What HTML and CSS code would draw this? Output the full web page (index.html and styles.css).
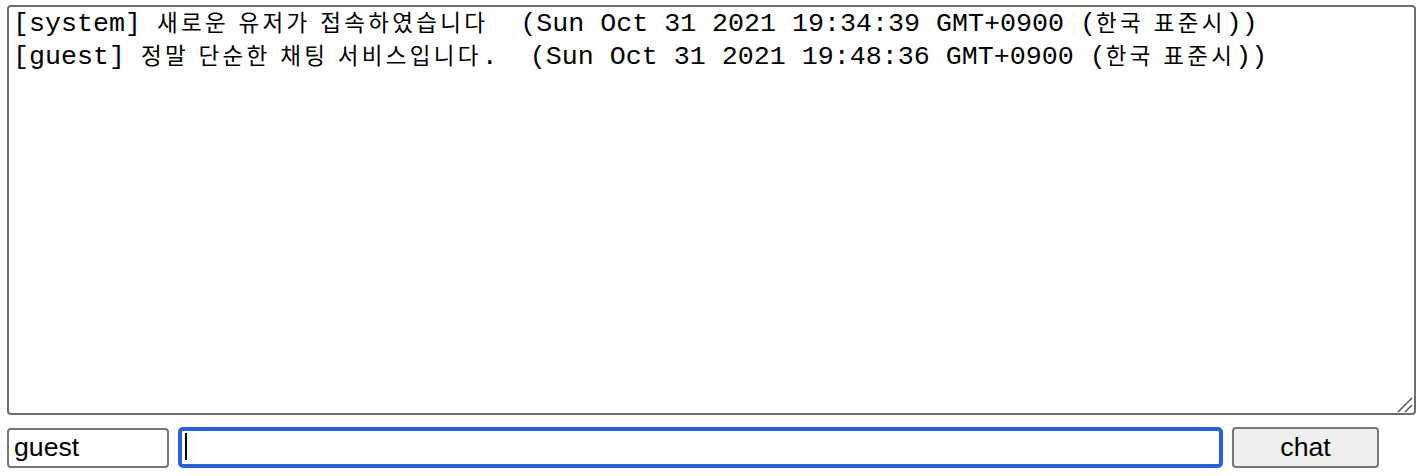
FILE: index.html
```html
<!DOCTYPE html>
<html lang="ko">
<head>
<meta charset="utf-8">
<title>chat</title>
<link rel="stylesheet" href="styles.css">
</head>
<body>
<main class="chat">
  <div class="log" role="log">
    <div class="line">[system] <span class="ko">새로운 유저가 접속하였습니다</span>  (Sun Oct 31 2021 19:34:39 GMT+0900 (<span class="ko">한국 표준시</span>))</div>
    <div class="line">[guest] <span class="ko">정말 단순한 채팅 서비스입니다</span>.  (Sun Oct 31 2021 19:48:36 GMT+0900 (<span class="ko">한국 표준시</span>))</div>
    <svg class="grip" width="20" height="20" viewBox="0 0 20 20" aria-hidden="true">
      <line x1="4" y1="19" x2="18" y2="5" stroke="#555" stroke-width="1.4"/>
      <line x1="11" y1="19" x2="18" y2="12" stroke="#555" stroke-width="1.4"/>
    </svg>
  </div>
  <form class="bar">
    <input class="name" type="text" value="guest">
    <span class="msg-wrap"><input class="msg" type="text" value=""></span>
    <button class="send" type="button">chat</button>
  </form>
</main>
</body>
</html>
```

FILE: styles.css
```css
html, body {
  margin: 0;
  padding: 0;
  background: #ffffff;
}

.chat {
  display: flex;
  flex-direction: column;
  padding: 5px 0 0 7px;
  gap: 12px;
}

.log {
  position: relative;
  box-sizing: border-box;
  width: 1409px;
  height: 410px;
  border: 2px solid #6e6e6e;
  border-radius: 4px;
  padding: 1px 4px 0;
  font-family: "Liberation Mono", "Noto Sans CJK KR", monospace;
  font-size: 26.67px;
  line-height: 33px;
  color: #000;
}

.line {
  height: 33px;
  white-space: pre;
}

.ko {
  font-family: "Noto Sans CJK KR", sans-serif;
  font-size: 22.5px;
  letter-spacing: 3.3px;
  line-height: 1;
}

.grip {
  position: absolute;
  right: 0;
  bottom: 0;
}

.bar {
  display: flex;
  align-items: center;
  margin: 0;
}

.name {
  box-sizing: border-box;
  width: 162px;
  height: 40px;
  border: 2px solid #767676;
  border-radius: 4px;
  padding: 0 5px;
  font-family: "Liberation Sans", Arial, sans-serif;
  font-size: 26.67px;
  color: #000;
  background: #fff;
  outline: none;
}

.msg-wrap {
  position: relative;
  display: flex;
  margin-left: 9px;
}

.msg-wrap::after {
  content: "";
  position: absolute;
  left: 7px;
  top: 6px;
  width: 2px;
  height: 27px;
  background: #000;
}

.msg {
  box-sizing: border-box;
  width: 1045px;
  height: 41px;
  border: 4px solid #2862d8;
  border-radius: 5px;
  padding: 0 6px;
  font-family: "Liberation Sans", Arial, sans-serif;
  font-size: 26.67px;
  background: #fff;
  outline: none;
}

.send {
  box-sizing: border-box;
  width: 147px;
  height: 41px;
  margin-left: 9px;
  border: 2px solid #767676;
  border-radius: 4px;
  background: #efefef;
  font-family: "Liberation Sans", Arial, sans-serif;
  font-size: 26.67px;
  color: #000;
  padding: 0;
}
```
